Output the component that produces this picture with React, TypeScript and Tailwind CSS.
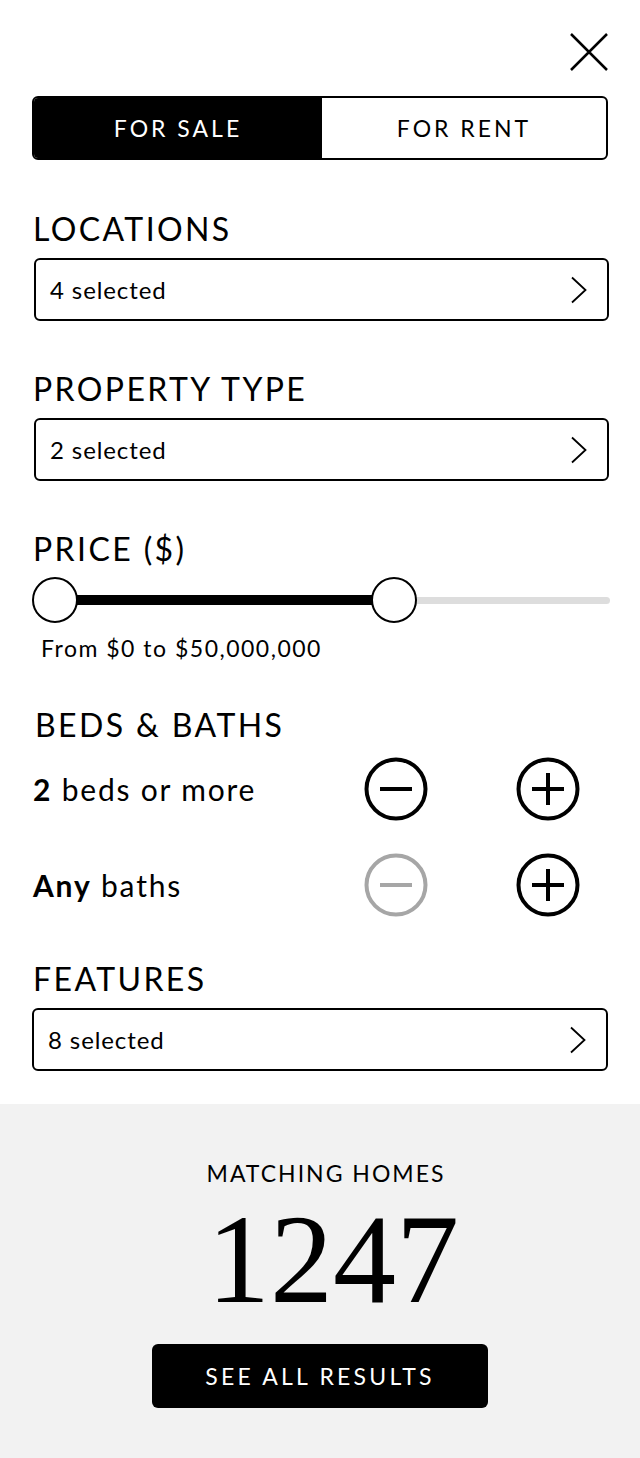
import React from "react";

const font = { fontFamily: "Lato, 'Noto Sans', sans-serif" };

function Chevron() {
  return (
    <svg width="18" height="28" viewBox="0 0 18 28" fill="none">
      <path d="M2 1.5 L15.5 14 L2 26.5" stroke="#000" strokeWidth="1.8" />
    </svg>
  );
}

function SelectBox({ text, className }: { text: string; className: string }) {
  return (
    <div
      className={`h-[63px] flex items-center justify-between border-2 border-black rounded-md pl-[14px] pr-[19px] ${className}`}
    >
      <span className="text-[24px] tracking-[0.9px]">{text}</span>
      <Chevron />
    </div>
  );
}

function Label({ children, className }: { children: React.ReactNode; className: string }) {
  return (
    <h2 className={`text-[32px] leading-[36px] tracking-[2.4px] ${className}`}>{children}</h2>
  );
}

function RoundButton({ plus, disabled }: { plus?: boolean; disabled?: boolean }) {
  const c = disabled ? "#a6a6a6" : "#000";
  return (
    <svg width="64" height="64" viewBox="0 0 64 64" fill="none">
      <circle cx="32" cy="32" r="29.5" stroke={c} strokeWidth="4" />
      <path d="M16 32 H48" stroke={c} strokeWidth="4" />
      {plus && <path d="M32 16 V48" stroke={c} strokeWidth="4" />}
    </svg>
  );
}

export default function App() {
  return (
    <div className="w-[640px] min-h-[1458px] bg-white text-black flex flex-col" style={font}>
      <div className="px-8">
        <div className="flex justify-end pt-[32px] h-[96px]">
          <svg width="40" height="40" viewBox="0 0 40 40" fill="none" className="-mr-px">
            <path d="M2 2 L38 38 M38 2 L2 38" stroke="#000" strokeWidth="2.5" />
          </svg>
        </div>

        <div className="flex h-[64px] border-2 border-black rounded-md overflow-hidden">
          <div className="w-[288px] bg-black text-white flex items-center justify-center text-[23px] tracking-[3px]">
            FOR SALE
          </div>
          <div className="flex-1 flex items-center justify-center text-[23px] tracking-[3px]">
            FOR RENT
          </div>
        </div>

        <Label className="mt-[51px] ml-px">LOCATIONS</Label>
        <SelectBox text="4 selected" className="mt-[11px] ml-[2px] -mr-px" />

        <Label className="mt-[50px] ml-px">PROPERTY TYPE</Label>
        <SelectBox text="2 selected" className="mt-[11px] ml-[2px] -mr-px" />

        <Label className="mt-[50px] ml-px">PRICE ($)</Label>
        <div className="relative h-[46px] mt-[10px] -mr-[2px]">
          <div className="absolute left-0 right-0 top-[20px] h-[7px] rounded-full bg-[#dddddd]" />
          <div className="absolute left-[24px] w-[338px] top-[18px] h-[10px] bg-black" />
          <div className="absolute left-0 top-0 w-[46px] h-[46px] rounded-full border-2 border-black bg-white" />
          <div className="absolute left-[339px] top-0 w-[46px] h-[46px] rounded-full border-2 border-black bg-white" />
        </div>
        <p className="mt-[13px] ml-[9px] text-[23px] leading-[24px] tracking-[1.5px]">
          From $0 to $50,000,000
        </p>

        <Label className="mt-[47px] ml-[3px]">BEDS &amp; BATHS</Label>
        <div className="flex items-center h-[64px] mt-[14px]">
          <span className="flex-1 text-[30px] tracking-[1.8px] ml-px">
            <b className="font-bold">2</b> beds or more
          </span>
          <div className="flex gap-[88px] mr-[28px]">
            <RoundButton />
            <RoundButton plus />
          </div>
        </div>
        <div className="flex items-center h-[64px] mt-[32px]">
          <span className="flex-1 text-[30px] tracking-[1.8px] ml-px">
            <b className="font-bold">Any</b> baths
          </span>
          <div className="flex gap-[88px] mr-[28px]">
            <RoundButton disabled />
            <RoundButton plus />
          </div>
        </div>

        <Label className="mt-[44px] ml-px">FEATURES</Label>
        <SelectBox text="8 selected" className="mt-[11px]" />
      </div>

      <div className="mt-[33px] flex-1 bg-[#f2f2f2] flex flex-col items-center pt-[55px] pb-[50px]">
        <p className="text-[23px] leading-[28px] tracking-[2px] ml-[12px]">MATCHING HOMES</p>
        <p
          className="text-[126px] leading-[126px] mt-[10px] ml-[26px]"
          style={{ fontFamily: "'Liberation Serif', 'DejaVu Serif', serif" }}
        >
          1247
        </p>
        <button className="mt-[21px] w-[336px] h-[64px] rounded-md bg-black text-white text-[23px] tracking-[3.2px]">
          SEE ALL RESULTS
        </button>
      </div>
    </div>
  );
}
